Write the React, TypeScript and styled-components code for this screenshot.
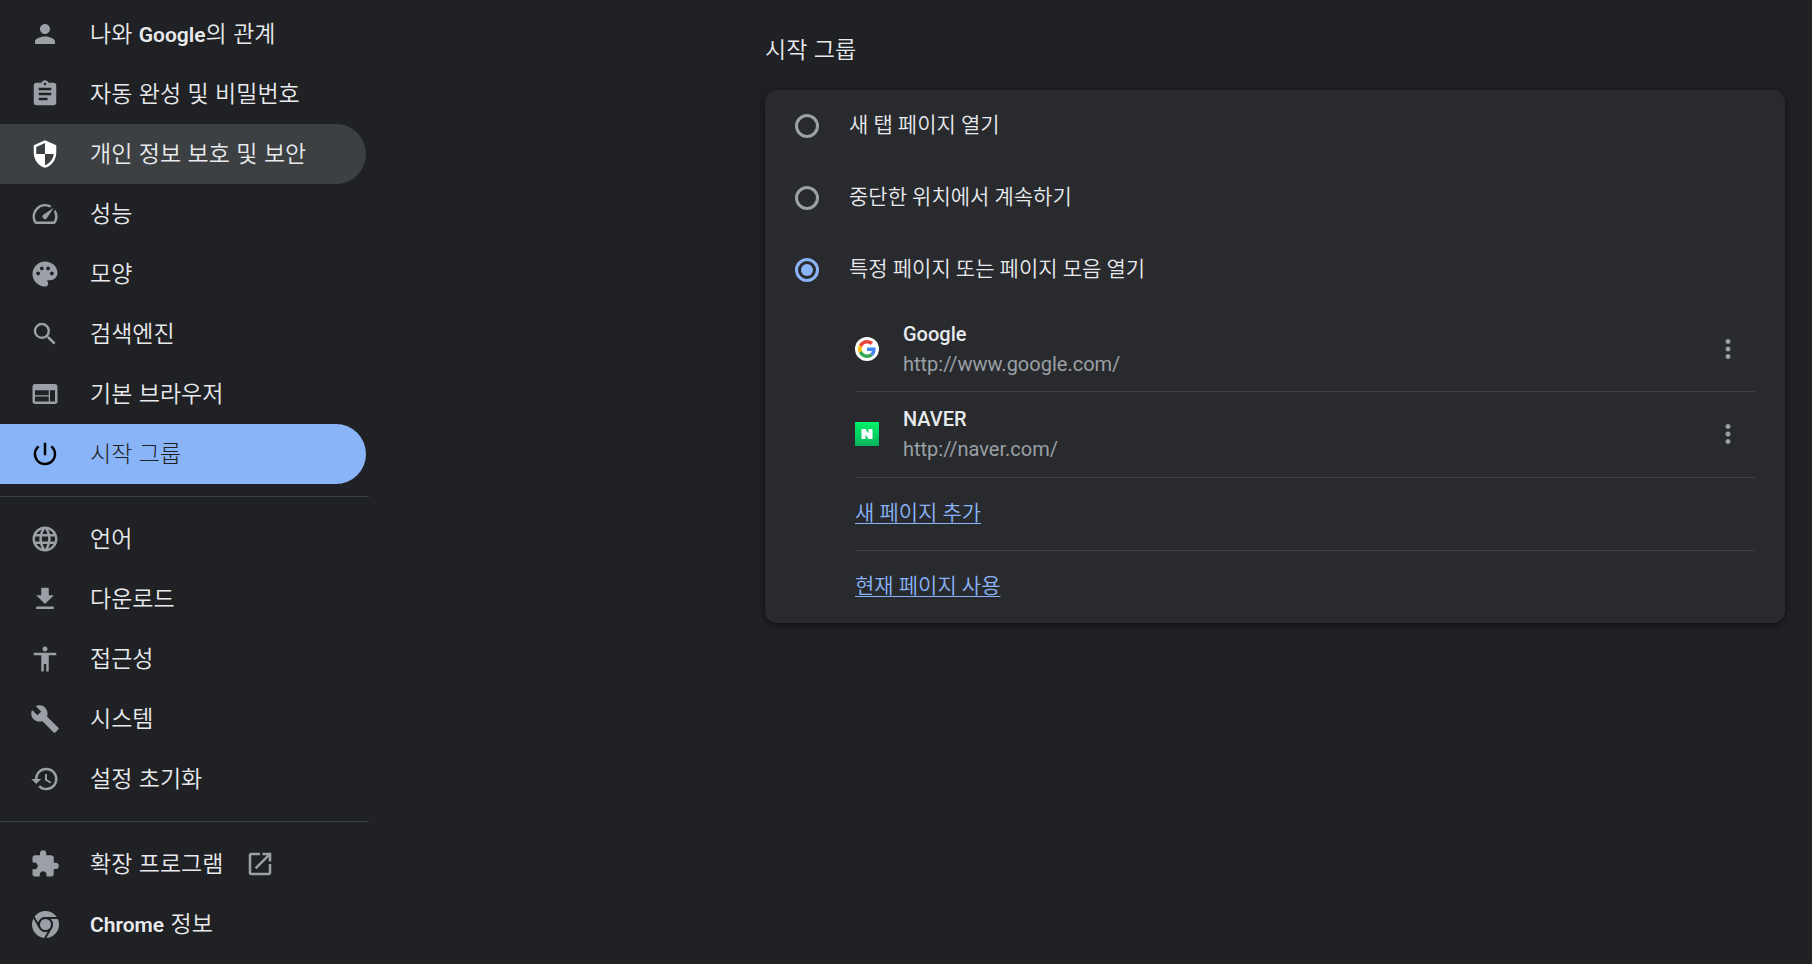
import React from "react";
import styled, { createGlobalStyle, css } from "styled-components";
import type { IconType } from "react-icons";
import {
  MdAccessibility,
  MdAssignment,
  MdBuild,
  MdDownload,
  MdExtension,
  MdHistory,
  MdLanguage,
  MdMoreVert,
  MdOpenInNew,
  MdPalette,
  MdPerson,
  MdPowerSettingsNew,
  MdSearch,
  MdSecurity,
  MdSpeed,
  MdWeb,
} from "react-icons/md";

const GlobalStyle = createGlobalStyle`
  *, *::before, *::after { box-sizing: border-box; }
  body {
    margin: 0;
    background: #202124;
    color: #e8eaed;
    font-family: Roboto, "Noto Sans CJK KR", sans-serif;
    font-size: 21px;
    font-weight: 350;
    line-height: 30px;
  }
`;

const Page = styled.div`
  display: flex;
  min-height: 100vh;
`;

const Sidebar = styled.nav`
  flex: 0 0 369px;
  padding: 4px 0 10px;
`;

const Divider = styled.hr`
  height: 1px;
  margin: 12px 0;
  border: 0;
  background: #3c4043;
`;

type ItemState = "normal" | "hover" | "selected";

const MenuLink = styled.a<{ $state: ItemState }>`
  display: flex;
  align-items: center;
  gap: 22px;
  height: 60px;
  margin-right: 3px;
  padding: 0 30px;
  border-radius: 0 30px 30px 0;
  color: #e8eaed;
  font-family: "Noto Sans CJK KR", sans-serif;
  font-size: 23px;
  text-decoration: none;

  > svg {
    flex: none;
    color: #9aa0a6;
  }

  ${({ $state }) =>
    $state === "hover" &&
    css`
      background: #3c4043;
      > svg { color: #fff; }
    `}

  ${({ $state }) =>
    $state === "selected" &&
    css`
      background: #8ab4f8;
      color: #202124;
      font-weight: 300;
      > svg { color: #000; }
    `}
`;

const MenuLabel = styled.span`
  padding: 0 0 4px 8px;
  white-space: nowrap;
`;

const Latin = styled.span`
  font-family: Roboto, sans-serif;
  font-size: 21px;
  font-weight: 600;
  line-height: 20px;
`;

const Main = styled.main`
  display: flex;
  flex: 1;
  justify-content: flex-end;
  min-width: 0;
  padding: 33px 27px 30px;
`;

const Section = styled.section`
  width: 100%;
  max-width: 1020px;
`;

const Title = styled.h2`
  margin: 0 0 27px;
  font-family: "Noto Sans CJK KR", sans-serif;
  font-size: 23px;
  font-weight: 350;
  line-height: 30px;
`;

const Card = styled.div`
  border-radius: 12px;
  background: #292a2d;
  box-shadow: 0 2px 4px rgba(0, 0, 0, 0.3), 0 2px 9px 3px rgba(0, 0, 0, 0.15);
`;

const Options = styled.fieldset`
  margin: 0;
  padding: 0;
  border: 0;
`;

const Option = styled.label`
  display: flex;
  align-items: center;
  gap: 30px;
  height: 72px;
  padding: 0 30px;
`;

const OptionText = styled.span`
  padding-bottom: 2px;
`;

const Radio = styled.input`
  display: grid;
  place-content: center;
  width: 24px;
  height: 24px;
  margin: 0;
  border: 3px solid #9aa0a6;
  border-radius: 50%;
  appearance: none;

  &:checked {
    border-color: #8ab4f8;
  }

  &:checked::before {
    content: "";
    width: 12px;
    height: 12px;
    border-radius: 50%;
    background: #8ab4f8;
  }
`;

const Pages = styled.ul`
  margin: 0;
  padding: 0 30px 0 90px;
  list-style: none;
`;

const PageRow = styled.li`
  display: flex;
  align-items: center;
  gap: 24px;
  min-height: 85px;

  & + & {
    min-height: 86px;
    padding-bottom: 1px;
    border-top: 1px solid #3f4042;
  }
`;

const ActionRow = styled.li`
  display: flex;
  align-items: center;
  height: 73px;
  padding-bottom: 2px;
  border-top: 1px solid #3f4042;
`;

const PageText = styled.div`
  flex: 1;
  min-width: 0;
  font-size: 20px;
  font-weight: 400;
`;

const PageName = styled.div`
  font-weight: 500;
`;

const PageUrl = styled.div`
  color: #9aa0a6;
`;

const MoreButton = styled.button`
  display: grid;
  place-items: center;
  width: 54px;
  height: 54px;
  padding: 0;
  border: 0;
  border-radius: 50%;
  background: none;
  color: #9aa0a6;
`;

const ActionLink = styled.a`
  color: #8ab4f8;
  text-decoration: underline;
  text-decoration-thickness: 1px;
  text-underline-offset: 3px;
`;

const ChromeIcon = () => (
  <svg width="30" height="30" viewBox="0 0 30 30" aria-hidden="true">
    <g fill="none" stroke="currentColor">
      <circle cx="15.5" cy="15.5" r="10.5" strokeWidth="6" />
      <g stroke="#202124" strokeWidth="2">
        <circle cx="15.5" cy="15.5" r="6.5" />
        <path d="M15.5 9H28" />
        <path d="M21.1 18.8L14.9 29.6" />
        <path d="M9.9 18.8L3.6 7.9" />
      </g>
    </g>
    <circle cx="15.5" cy="15.5" r="5.5" fill="currentColor" />
  </svg>
);

const GoogleIcon = () => (
  <svg width="24" height="24" viewBox="0 0 24 24" aria-hidden="true">
    <circle cx="12" cy="12" r="12" fill="#fff" />
    <g transform="translate(3 3) scale(.375)">
      <path fill="#EA4335" d="M24 9.500c3.540 0 6.710 1.220 9.210 3.600l6.850-6.850C35.900 2.380 30.470 0 24 0 14.620 0 6.510 5.380 2.560 13.220l7.980 6.190C12.430 13.720 17.740 9.500 24 9.500z" />
      <path fill="#4285F4" d="M46.980 24.550c0-1.570-.15-3.090-.38-4.550H24v9.020h12.940c-.58 2.960-2.260 5.480-4.780 7.180l7.730 6c4.510-4.180 7.090-10.360 7.090-17.650z" />
      <path fill="#FBBC05" d="M10.530 28.590c-.48-1.450-.76-2.990-.76-4.590s.27-3.140.76-4.590l-7.980-6.190C.92 16.460 0 20.120 0 24s.92 7.540 2.560 10.780l7.970-6.190z" />
      <path fill="#34A853" d="M24 48c6.480 0 11.930-2.130 15.890-5.810l-7.730-6c-2.150 1.450-4.920 2.300-8.160 2.300-6.260 0-11.570-4.220-13.470-9.910l-7.980 6.190C6.510 42.620 14.620 48 24 48z" />
    </g>
  </svg>
);

const NaverIcon = () => (
  <svg width="24" height="24" viewBox="0 0 24 24" aria-hidden="true">
    <defs>
      <linearGradient id="naver" x1="0" y1="0" x2="0" y2="1">
        <stop offset="0" stopColor="#00f26a" />
        <stop offset="1" stopColor="#06b45c" />
      </linearGradient>
    </defs>
    <rect width="24" height="24" rx="0.500" fill="url(#naver)" />
    <path fill="#fff" d="M6.500 7h4l3 4.500V7h4v10h-4l-3-4.500V17h-4z" />
  </svg>
);

interface MenuItem {
  icon: IconType | React.FC;
  label: React.ReactNode;
  state?: ItemState;
  external?: boolean;
}

const groups: MenuItem[][] = [
  [
    { icon: MdPerson, label: <>나와 <Latin>Google</Latin>의 관계</> },
    { icon: MdAssignment, label: "자동 완성 및 비밀번호" },
    { icon: MdSecurity, label: "개인 정보 보호 및 보안", state: "hover" },
    { icon: MdSpeed, label: "성능" },
    { icon: MdPalette, label: "모양" },
    { icon: MdSearch, label: "검색엔진" },
    { icon: MdWeb, label: "기본 브라우저" },
    { icon: MdPowerSettingsNew, label: "시작 그룹", state: "selected" },
  ],
  [
    { icon: MdLanguage, label: "언어" },
    { icon: MdDownload, label: "다운로드" },
    { icon: MdAccessibility, label: "접근성" },
    { icon: MdBuild, label: "시스템" },
    { icon: MdHistory, label: "설정 초기화" },
  ],
  [
    { icon: MdExtension, label: "확장 프로그램", external: true },
    { icon: ChromeIcon, label: <><Latin>Chrome</Latin> 정보</> },
  ],
];

const options = [
  "새 탭 페이지 열기",
  "중단한 위치에서 계속하기",
  "특정 페이지 또는 페이지 모음 열기",
];

const pages = [
  { icon: GoogleIcon, name: "Google", url: "http://www.google.com/" },
  { icon: NaverIcon, name: "NAVER", url: "http://naver.com/" },
];

const actions = ["새 페이지 추가", "현재 페이지 사용"];

export default function App() {
  return (
    <>
      <GlobalStyle />
      <Page lang="ko">
        <Sidebar>
          {groups.map((group, g) => (
            <React.Fragment key={g}>
              {g > 0 && <Divider />}
              {group.map(({ icon: Icon, label, state = "normal", external }, i) => (
                <MenuLink
                  key={i}
                  href="#"
                  $state={state}
                  aria-current={state === "selected" ? "page" : undefined}
                >
                  <Icon size={30} />
                  <MenuLabel>{label}</MenuLabel>
                  {external && <MdOpenInNew size={30} />}
                </MenuLink>
              ))}
            </React.Fragment>
          ))}
        </Sidebar>
        <Main>
          <Section>
            <Title>시작 그룹</Title>
            <Card>
              <Options aria-label="시작 그룹">
                {options.map((text, i) => (
                  <Option key={text}>
                    <Radio type="radio" name="startup" defaultChecked={i === 2} />
                    <OptionText>{text}</OptionText>
                  </Option>
                ))}
              </Options>
              <Pages>
                {pages.map(({ icon: Icon, name, url }) => (
                  <PageRow key={name}>
                    <Icon />
                    <PageText>
                      <PageName>{name}</PageName>
                      <PageUrl>{url}</PageUrl>
                    </PageText>
                    <MoreButton aria-label={name}>
                      <MdMoreVert size={30} />
                    </MoreButton>
                  </PageRow>
                ))}
                {actions.map((text) => (
                  <ActionRow key={text}>
                    <ActionLink href="#">{text}</ActionLink>
                  </ActionRow>
                ))}
              </Pages>
            </Card>
          </Section>
        </Main>
      </Page>
    </>
  );
}
